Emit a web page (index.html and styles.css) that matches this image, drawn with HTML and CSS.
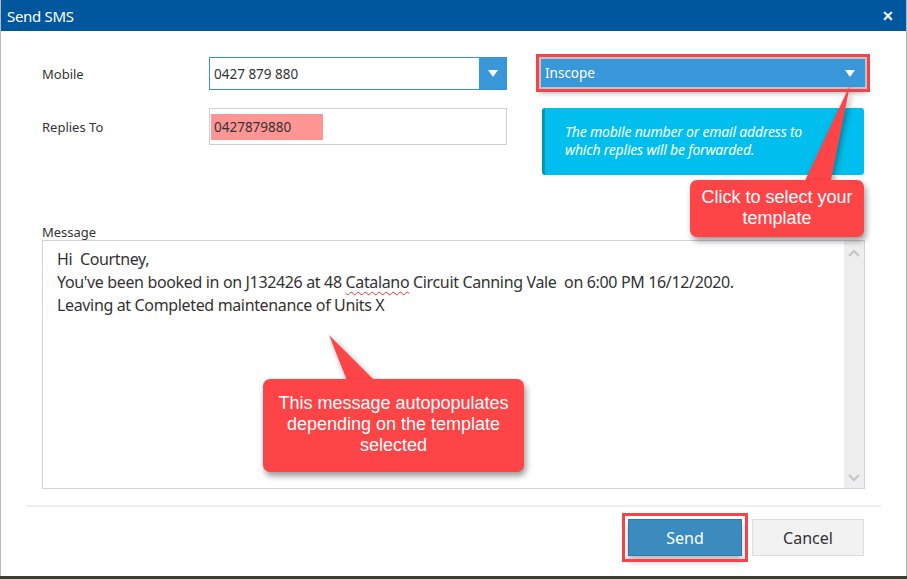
FILE: index.html
```html
<!DOCTYPE html>
<html lang="en">
<head>
 <meta charset="UTF-8">
 <title>Send SMS</title>
 <link rel="stylesheet" href="styles.css">
</head>
<body>
<div class="dialog">
 <div class="title-bar">
  <span class="title">Send SMS</span>
  <span class="close">&#x2715;</span>
 </div>
 <div class="dialog-body">
  <div class="top">
   <div class="fields">
    <div class="row row-mobile">
     <label class="field-label">Mobile</label>
     <div class="combo">
      <span class="combo-value">0427 879 880</span>
      <span class="combo-btn"><span class="tri"></span></span>
     </div>
    </div>
    <div class="row row-replies">
     <label class="field-label">Replies To</label>
     <div class="text-box">
      <span class="highlight">0427879880</span>
     </div>
    </div>
   </div>
   <div class="side">
    <div class="template-select">
     <span>Inscope</span>
     <span class="tri"></span>
    </div>
    <div class="info-box">
     The mobile number or email address to<br>which replies will be forwarded.
    </div>
   </div>
  </div>

  <div class="message">
   <label class="msg-label">Message</label>
   <div class="msg-box">
    <div class="msg-text">
     Hi&nbsp; Courtney,<br>
     You've been booked in on J132426 at 48 <span class="spell">Catalano</span> Circuit Canning Vale&nbsp; on 6:00 PM 16/12/2020.<br>
     Leaving at Completed maintenance of Units X
    </div>
    <div class="scrollbar">
     <svg width="12" height="8" viewBox="0 0 12 8"><path d="M1 7 L6 2 L11 7" fill="none" stroke="#c4c4c4" stroke-width="2"/></svg>
     <svg width="12" height="8" viewBox="0 0 12 8"><path d="M1 1 L6 6 L11 1" fill="none" stroke="#c4c4c4" stroke-width="2"/></svg>
    </div>
   </div>
  </div>

  <div class="footer">
   <button class="btn btn-send">Send</button>
   <button class="btn btn-cancel">Cancel</button>
  </div>

  <!-- annotation callouts -->
  <svg class="tail tail-one" width="80" height="110" viewBox="0 0 80 110"><polygon points="68,0 21,100 48,100" fill="#fd4447"/></svg>
  <div class="callout callout-one">Click to select your<br>template</div>
  <svg class="tail tail-two" width="60" height="50" viewBox="0 0 60 50"><polygon points="2,0 21,48 50,48" fill="#fd4447"/></svg>
  <div class="callout callout-two">This message autopopulates<br>depending on the template<br>selected</div>
 </div>
</div>
<div class="taskbar"></div>
</body>
</html>
```

FILE: styles.css
```css
body {
 margin: 0;
 background: #4a4a3c;
 font-family: "Noto Sans", "Open Sans", sans-serif;
 color: #333;
 }
.dialog {
 width: 905px;
 height: 576px;
 background: #fff;
 border-left: 1px solid #b8b8b8;
 border-right: 1px solid #b8b8b8;
 display: flex;
 flex-direction: column;
 }
.title-bar {
 height: 31px;
 background: #01579d;
 color: #fff;
 display: flex;
 align-items: center;
 justify-content: space-between;
 padding: 0 12px 0 6px;
 }
.title {
 font-size: 15px;
 letter-spacing: -0.3px;
 }
.close {
 font-size: 14px;
 font-weight: bold;
 }
.dialog-body {
 position: relative;
 flex: 1;
 padding: 0 41px 0 41px;
 }
.top {
 display: flex;
 justify-content: space-between;
 padding-top: 26px;
 }
.row {
 display: flex;
 align-items: center;
 }
.row-replies {
 margin-top: 18px;
 }
.field-label {
 width: 167px;
 font-size: 13px;
 color: #333;
 }
.combo {
 width: 298px;
 height: 33px;
 box-sizing: border-box;
 border: 1px solid #3a8fd6;
 display: flex;
 align-items: center;
 justify-content: space-between;
 font-size: 13.5px;
 }
.combo-value {
 padding-left: 4px;
 }
.combo-btn {
 width: 27px;
 height: 100%;
 background: #3898d9;
 display: flex;
 align-items: center;
 justify-content: center;
 }
.tri {
 width: 0;
 height: 0;
 border-left: 5px solid transparent;
 border-right: 5px solid transparent;
 border-top: 7px solid #fff;
 }
.text-box {
 width: 298px;
 height: 37px;
 box-sizing: border-box;
 border: 1px solid #cfcfcf;
 display: flex;
 align-items: center;
 padding-left: 1px;
 }
.highlight {
 background: #fe9595;
 font-size: 13.5px;
 width: 109px;
 height: 26px;
 line-height: 26px;
 padding-left: 3px;
 }
.side {
 width: 328px;
 display: flex;
 flex-direction: column;
 align-items: flex-end;
 }
.template-select {
 width: 328px;
 height: 32px;
 box-sizing: border-box;
 background: #3898d9;
 border: 2px solid #c3c3c3;
 outline: 3px solid #f4434a;
 box-shadow: 0 4px 5px rgba(0, 0, 0, 0.3);
 color: #fff;
 font-size: 13.5px;
 display: flex;
 align-items: center;
 justify-content: space-between;
 padding: 0 10px 0 4px;
 margin-top: 0;
 margin-right: -2px;
 }
.info-box {
 width: 322px;
 height: 67px;
 box-sizing: border-box;
 margin-top: 19px;
 margin-right: 1px;
 background: #00bfee;
 border-left: 3px solid #0094b8;
 border-radius: 3px;
 color: #fff;
 font-style: italic;
 font-size: 14px;
 line-height: 18px;
 padding: 15px 0 0 20px;
 letter-spacing: -0.2px;
 }
.message {
 margin-top: 49px;
 }
.msg-label {
 display: block;
 font-size: 13px;
 line-height: 16px;
 }
.msg-box {
 height: 249px;
 box-sizing: border-box;
 border: 1px solid #d0d3dc;
 display: flex;
 justify-content: space-between;
 }
.msg-text {
 padding: 7px 0 0 14px;
 font-size: 16px;
 line-height: 23px;
 letter-spacing: -0.35px;
 }
.spell {
 text-decoration: underline wavy #e03030;
 text-decoration-thickness: 1px;
 text-underline-offset: 3px;
 }
.scrollbar {
 width: 20px;
 background: #eeeeee;
 display: flex;
 flex-direction: column;
 justify-content: space-between;
 align-items: center;
 padding: 8px 0 6px;
 }
.footer {
 margin: 16px -16px 0 -16px;
 border-top: 2px solid #efefef;
 display: flex;
 justify-content: flex-end;
 gap: 10px;
 padding: 12px 17px 0 0;
 }
.btn {
 height: 37px;
 font-family: "Noto Sans", sans-serif;
 font-size: 16px;
 cursor: pointer;
 }
.btn-send {
 width: 114px;
 background: #3b8bbf;
 color: #fff;
 border: 1px solid #2f78a8;
 outline: 3px solid #f4434a;
 outline-offset: 3px;
 box-shadow: 0 6px 6px rgba(0, 0, 0, 0.25);
 }
.btn-cancel {
 width: 112px;
 background: #f2f2f2;
 color: #333;
 border: 1px solid #dcdcdc;
 }
.callout {
 position: absolute;
 background: #fd4447;
 color: #fff;
 border-radius: 7px;
 font-family: "Liberation Sans", Arial, sans-serif;
 font-size: 18px;
 line-height: 21px;
 text-align: center;
 box-shadow: 2px 4px 6px rgba(0, 0, 0, 0.4);
 box-sizing: border-box;
 }
.callout-one {
 left: 689px;
 top: 149px;
 width: 174px;
 height: 57px;
 padding-top: 7px;
 }
.callout-two {
 left: 262px;
 top: 348px;
 width: 261px;
 height: 93px;
 padding-top: 14px;
 }
.tail {
 position: absolute;
 filter: drop-shadow(2px 3px 3px rgba(0, 0, 0, 0.35));
 }
.tail-one {
 left: 781px;
 top: 54px;
 }
.tail-two {
 left: 326px;
 top: 304px;
 }
.taskbar {
 height: 3px;
 background: #3c3c30;
 }
```
